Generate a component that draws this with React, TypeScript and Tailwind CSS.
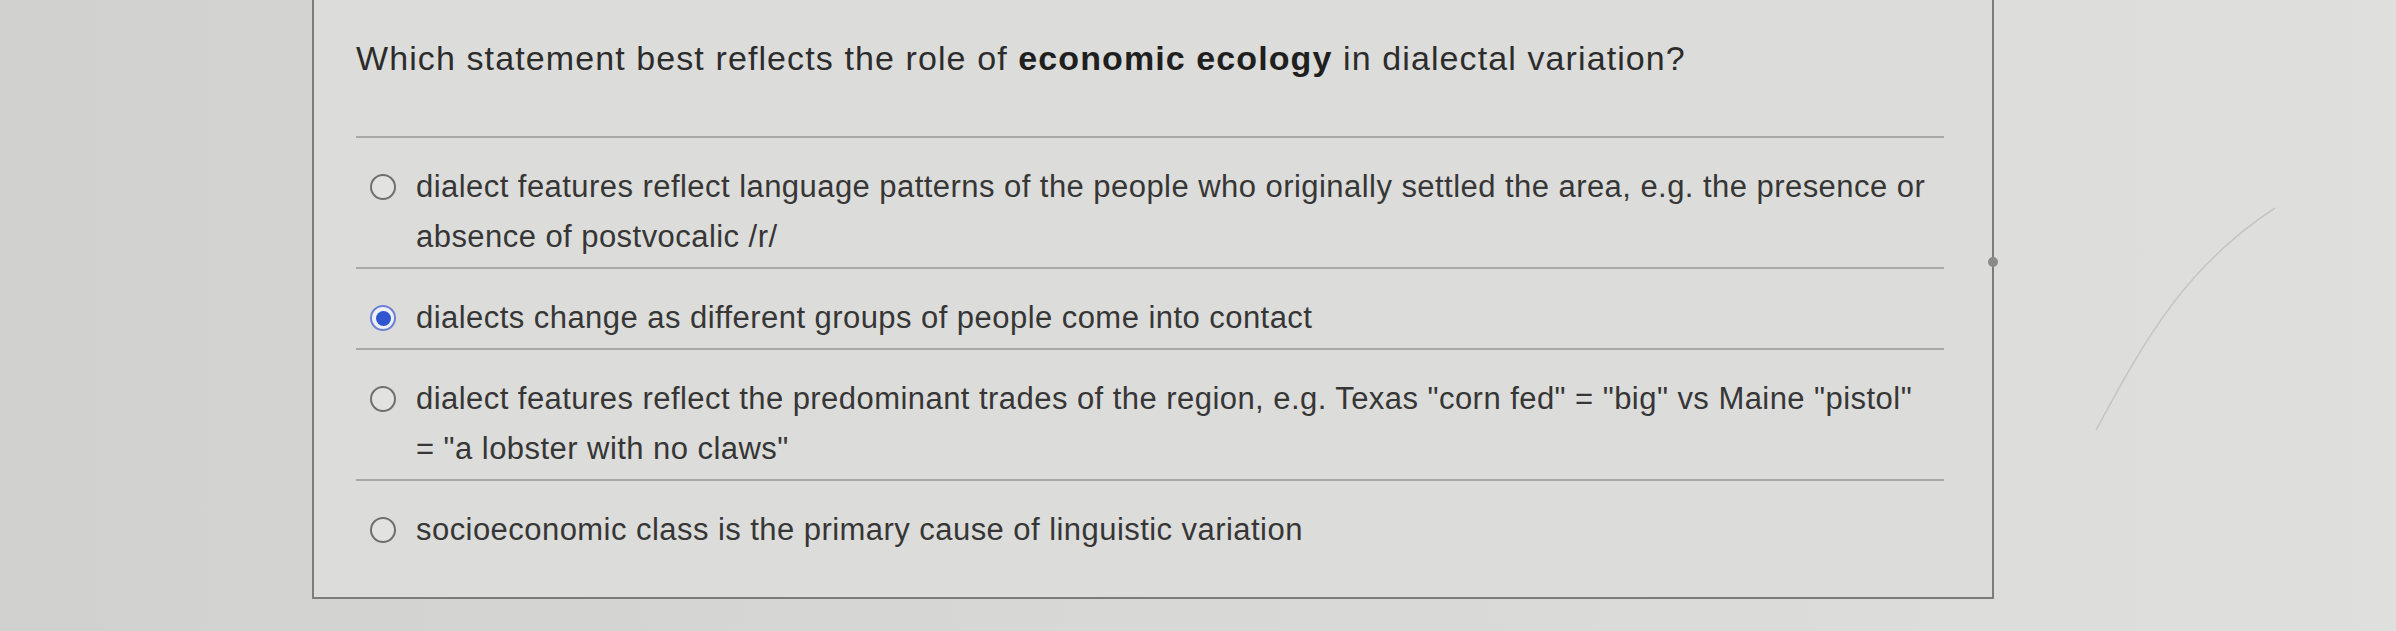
import React from "react";

type Option = {
  id: string;
  text: string;
};

const options: Option[] = [
  {
    id: "a",
    text: "dialect features reflect language patterns of the people who originally settled the area, e.g. the presence or absence of postvocalic /r/",
  },
  {
    id: "b",
    text: "dialects change as different groups of people come into contact",
  },
  {
    id: "c",
    text: 'dialect features reflect the predominant trades of the region, e.g. Texas "corn fed" = "big" vs Maine "pistol" =\u00a0"a lobster with no claws"',
  },
  {
    id: "d",
    text: "socioeconomic class is the primary cause of linguistic variation",
  },
];

function Radio({ checked }: { checked: boolean }) {
  if (checked) {
    return (
      <span className="flex h-[26px] w-[26px] items-center justify-center rounded-full border-2 border-[#6b80d6] bg-[#eef0f6]">
        <span className="h-[15px] w-[15px] rounded-full bg-[#2e55cf]" />
      </span>
    );
  }
  return (
    <span className="block h-[26px] w-[26px] rounded-full border-[2.5px] border-[#6f6f6f] bg-[#e2e2e0]" />
  );
}

export default function App() {
  const selected = "b";

  return (
    <div
      className="relative flex h-[631px] w-[2396px] overflow-hidden bg-gradient-to-r from-[#d1d1cf] via-[#d8d8d6] to-[#dfdfdd]"
      style={{ fontFamily: '"Liberation Sans", Arial, sans-serif' }}
    >
      <div className="ml-[312px] flex h-[599px] w-[1682px] flex-col border-x-2 border-b-2 border-[#7c7c7c] bg-[#dcdcda] pl-[42px] pr-[48px]">
        <h1 className="pt-[33px] pb-[53px] text-[34px] leading-[50px] font-normal tracking-[1.1px] text-[#2c2c2c]">
          Which statement best reflects the role of{" "}
          <strong className="font-bold text-[#1f1f1f]">economic ecology</strong> in
          dialectal variation?
        </h1>

        <div className="flex flex-col">
          {options.map((opt, i) => (
            <label
              key={opt.id}
              className={`flex border-t-2 border-[#a9a9a7] pt-[24px] ${
                i === options.length - 1 ? "pb-0" : "pb-[5px]"
              }`}
            >
              <span className="flex h-[50px] w-[60px] shrink-0 items-center pl-[14px]">
                <Radio checked={opt.id === selected} />
              </span>
              <span className="text-[31px] leading-[50px] tracking-[0.45px] text-[#363636]">
                {opt.text}
              </span>
            </label>
          ))}
        </div>
      </div>

      <svg
        className="pointer-events-none absolute left-0 top-0"
        width="2396"
        height="631"
        viewBox="0 0 2396 631"
      >
        <path
          d="M2096 430 C 2140 350, 2180 270, 2275 208"
          fill="none"
          stroke="#c6c6c4"
          strokeWidth="1.5"
        />
        <circle cx="1993" cy="262" r="5" fill="#8a8a8a" />
      </svg>
    </div>
  );
}
